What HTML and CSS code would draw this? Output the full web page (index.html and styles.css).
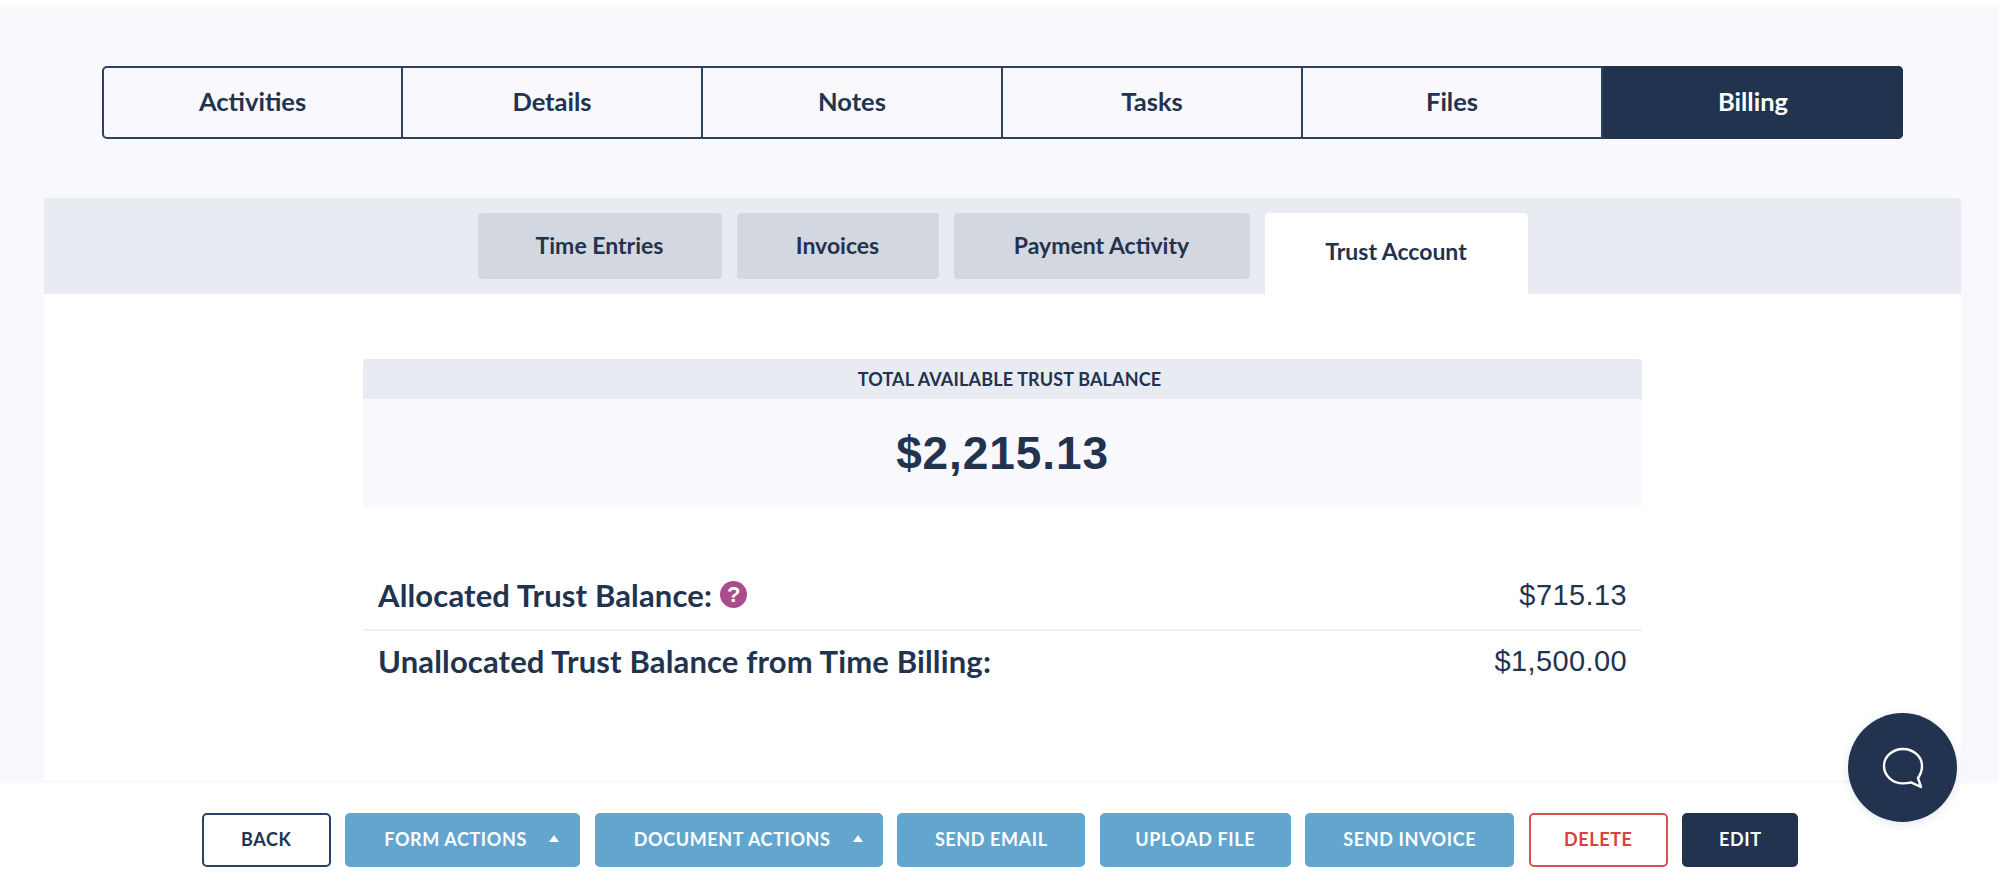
FILE: index.html
```html
<!DOCTYPE html>
<html lang="en">
<head>
    <meta charset="UTF-8">
    <meta name="viewport" content="width=device-width, initial-scale=1.0">
    <title>Trust Account</title>
    <link rel="stylesheet" href="styles.css">
</head>
<body>
    <main>
        <nav class="main-tabs">
            <a class="main-tab">Activities</a>
            <a class="main-tab">Details</a>
            <a class="main-tab">Notes</a>
            <a class="main-tab">Tasks</a>
            <a class="main-tab">Files</a>
            <a class="main-tab active">Billing</a>
        </nav>
        <section class="panel">
            <div class="sub-tabs">
                <a class="sub-tab tab-time">Time Entries</a>
                <a class="sub-tab tab-invoices">Invoices</a>
                <a class="sub-tab tab-payment">Payment Activity</a>
                <a class="sub-tab tab-trust active">Trust Account</a>
            </div>
            <div class="panel-body">
                <div class="balance">
                    <div class="balance-title">TOTAL AVAILABLE TRUST BALANCE</div>
                    <div class="balance-amount">$2,215.13</div>
                </div>
                <div class="rows">
                    <div class="row first">
                        <span class="row-label">Allocated Trust Balance: <span class="help">?</span></span>
                        <span class="row-value">$715.13</span>
                    </div>
                    <div class="row">
                        <span class="row-label">Unallocated Trust Balance from Time Billing:</span>
                        <span class="row-value">$1,500.00</span>
                    </div>
                </div>
            </div>
        </section>
    </main>
    <footer class="actions">
        <button class="btn btn-back">BACK</button>
        <button class="btn btn-blue btn-menu btn-form">FORM ACTIONS <span class="caret"></span></button>
        <button class="btn btn-blue btn-menu btn-doc">DOCUMENT ACTIONS <span class="caret"></span></button>
        <button class="btn btn-blue btn-email">SEND EMAIL</button>
        <button class="btn btn-blue btn-upload">UPLOAD FILE</button>
        <button class="btn btn-blue btn-invoice">SEND INVOICE</button>
        <button class="btn btn-delete">DELETE</button>
        <button class="btn btn-edit">EDIT</button>
    </footer>
    <button class="chat">
        <svg width="44" height="42" viewBox="0 0 44 42" fill="none" stroke="#fff" stroke-width="2.4" stroke-linejoin="round">
            <path d="M22 2C32.5 2 41 9.6 41 19C41 23.5 39.5 27.5 37 31L40 40L30 35.4C27.5 36.1 25 36.4 22 36.4C11.5 36.4 3 28.6 3 19C3 9.6 11.5 2 22 2Z"/>
        </svg>
    </button>
</body>
</html>
```

FILE: styles.css
```css
html, body {
    height: 100%;
}
body {
    margin: 0;
    padding-top: 7px;
    box-sizing: border-box;
    display: flex;
    flex-direction: column;
    background-color: #fff;
    color: #22334f;
    font-family: Lato, "Liberation Sans", sans-serif;
    overflow: hidden;
}
main {
    flex: 1;
    display: flex;
    flex-direction: column;
    padding: 59px 38px 0 44px;
    background-color: #f8f8fd;
}

/* top tabs */
.main-tabs {
    display: flex;
    height: 73px;
    margin: 0 58px 0 58px;
    box-sizing: border-box;
    border: 2px solid #2d4263;
    border-radius: 5px;
}
.main-tab {
    flex: 0 0 300px;
    display: flex;
    align-items: center;
    justify-content: center;
    padding-bottom: 4px;
    box-sizing: border-box;
    border-right: 2px solid #2d4263;
    font-size: 25.5px;
    font-weight: 700;
}
.main-tab:first-child {
    flex-basis: 299px;
}
.main-tab.active {
    flex: 1;
    margin: -2px -2px -2px 0;
    border: none;
    border-radius: 0 5px 5px 0;
    background-color: #22334f;
    color: #fff;
}

/* billing panel */
.panel {
    flex: 1;
    display: flex;
    flex-direction: column;
    margin-top: 59px;
    background-color: #fff;
    border-radius: 4px 4px 0 0;
}
.sub-tabs {
    display: flex;
    justify-content: center;
    align-items: flex-start;
    gap: 15px;
    height: 96px;
    padding-top: 15px;
    box-sizing: border-box;
    background-color: #e8ebf2;
    border-radius: 4px 4px 0 0;
}
.sub-tab {
    display: flex;
    align-items: center;
    justify-content: center;
    height: 66px;
    padding-bottom: 3px;
    box-sizing: border-box;
    background-color: #d3d7e0;
    border-radius: 4px;
    font-size: 23px;
    font-weight: 700;
}
.tab-time { width: 244px; }
.tab-invoices { width: 202px; }
.tab-payment { width: 296px; }
.tab-trust { width: 263px; }
.sub-tab.active {
    height: 81px;
    padding-bottom: 6px;
    background-color: #fff;
    border-radius: 4px 4px 0 0;
}
.panel-body {
    width: 1279px;
    margin: 65px auto 0;
}
.balance {
    background-color: #f8f8fd;
    border-radius: 4px 4px 0 0;
}
.balance-title {
    height: 40px;
    padding-left: 14px;
    line-height: 40px;
    background-color: #e8ebf2;
    border-radius: 4px 4px 0 0;
    text-align: center;
    font-size: 18px;
    font-weight: 700;
    letter-spacing: 0.15px;
}
.balance-amount {
    height: 108px;
    line-height: 108px;
    text-align: center;
    font-family: "Liberation Sans", Arial, sans-serif;
    font-size: 46px;
    font-weight: 700;
    letter-spacing: 0.9px;
}
.rows {
    margin-top: 54px;
}
.row {
    display: flex;
    justify-content: space-between;
    align-items: center;
    height: 60px;
    padding: 0 15px;
}
.row.first {
    height: 68px;
    border-bottom: 2px solid #eef0f5;
}
.row-label {
    display: flex;
    align-items: center;
    gap: 8px;
    padding-bottom: 1px;
    font-size: 31px;
    font-weight: 700;
    letter-spacing: 0.15px;
}
.row-value {
    padding-top: 1px;
    font-family: "Liberation Sans", Arial, sans-serif;
    font-size: 29px;
    letter-spacing: 0.4px;
}
.help {
    display: inline-block;
    width: 27px;
    height: 27px;
    margin-bottom: 1px;
    line-height: 27px;
    border-radius: 50%;
    background-color: #a94d8a;
    color: #fff;
    text-align: center;
    font-family: "Liberation Sans", Arial, sans-serif;
    font-size: 22px;
    font-weight: 700;
    letter-spacing: 0;
}

/* bottom action bar */
.actions {
    display: flex;
    justify-content: center;
    align-items: center;
    gap: 14.5px;
    height: 116px;
    padding-left: 1px;
    box-sizing: border-box;
    border-top: 3px solid #f8f8fd;
    background-color: #fff;
}
.btn {
    display: flex;
    align-items: center;
    justify-content: center;
    height: 54px;
    padding: 0 0 2px;
    box-sizing: border-box;
    border: none;
    border-radius: 5px;
    font-family: Lato, "Liberation Sans", sans-serif;
    font-size: 18px;
    font-weight: 700;
    letter-spacing: 0.6px;
    white-space: nowrap;
}
.btn-menu {
    justify-content: flex-start;
    padding-left: 39px;
}
.btn-back {
    width: 129px;
    background-color: #fff;
    border: 2px solid #2d4263;
    color: #22334f;
}
.btn-blue {
    background-color: #62a6d0;
    color: #fff;
}
.btn-form { width: 235px; }
.btn-doc { width: 288px; }
.btn-email { width: 188px; }
.btn-upload { width: 191px; }
.btn-invoice { width: 209px; }
.btn-delete {
    width: 139px;
    background-color: #fff;
    border: 2px solid #d9534f;
    color: #d9413e;
}
.btn-edit {
    width: 116px;
    background-color: #22334f;
    color: #fff;
}
.caret {
    width: 0;
    height: 0;
    margin-left: 22px;
    border-left: 5px solid transparent;
    border-right: 5px solid transparent;
    border-bottom: 7px solid #fff;
}

/* chat launcher, floats over the page */
.chat {
    position: fixed;
    left: 1848px;
    top: 713px;
    display: flex;
    align-items: center;
    justify-content: center;
    width: 109px;
    height: 109px;
    padding: 0;
    border: none;
    border-radius: 50%;
    background-color: #22334f;
    box-shadow: 0 2px 10px rgba(34, 51, 79, 0.12);
}
```
